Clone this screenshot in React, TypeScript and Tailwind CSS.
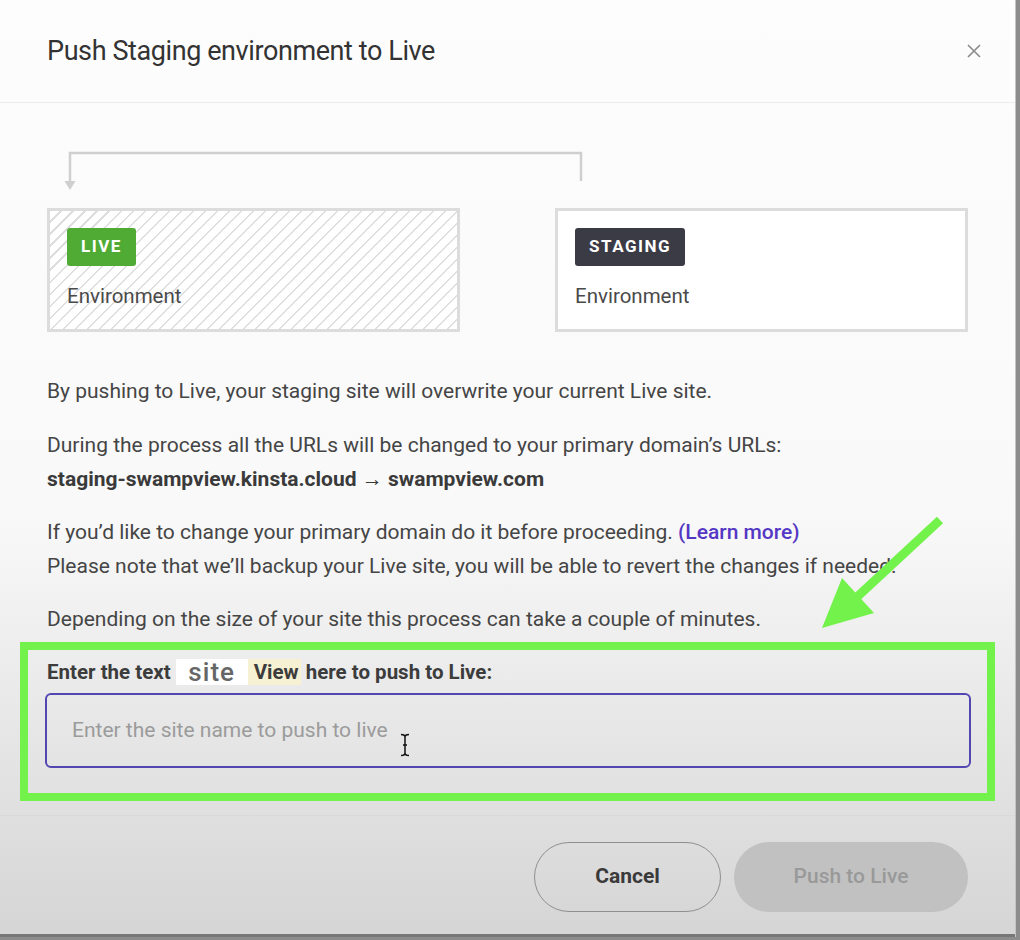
import React from 'react';

const font = { fontFamily: 'Roboto, "Liberation Sans", sans-serif' };

function Connector() {
  // bracket line running from the Staging card back to the Live card
  return (
    <svg width="530" height="42" viewBox="0 0 530 42" className="block ml-[16px]">
      <path d="M7 32 V2 H518 V30" fill="none" stroke="#cfcfcf" strokeWidth="2.5" />
      <path d="M1.5 30 L12.5 30 L7 39 Z" fill="#cfcfcf" />
    </svg>
  );
}

function EnvCard({ label, badgeClass, hatched }: { label: string; badgeClass: string; hatched?: boolean }) {
  return (
    <div
      className={`h-[124px] border-[3px] border-[#dcdcdc] pl-[17px] pt-[17px] ${
        hatched
          ? 'bg-[repeating-linear-gradient(135deg,#ffffff_0px,#ffffff_7px,#dedede_7px,#dedede_8.5px)]'
          : 'bg-white'
      }`}
    >
      <span
        className={`inline-flex items-center h-[38px] px-[14px] rounded-[3px] text-white font-bold text-[17px] tracking-[0.09em] ${badgeClass}`}
      >
        {label}
      </span>
      <div className="mt-[15px] text-[20.5px] text-[#4a4a4a]">Environment</div>
    </div>
  );
}

function Arrow() {
  return (
    <svg width="130" height="120" viewBox="0 0 130 120" className="absolute left-[815px] top-[512px]">
      <path d="M125 8 L42 85" stroke="#72f24b" strokeWidth="9" strokeLinecap="butt" />
      <path d="M7 116 L27 66 L59 101 Z" fill="#72f24b" />
    </svg>
  );
}

export default function App() {
  return (
    <div className="w-[1020px] h-[940px] bg-[#8c8c8c] overflow-hidden" style={font}>
      <div className="relative w-[1016px] h-[937px] flex flex-col bg-linear-to-b from-[#fdfdfd] via-[#f9f9f9] via-55% to-[#d5d5d5] border-r border-[#c4c4c4]">
        {/* Header */}
        <div className="h-[103px] flex-shrink-0 flex items-center justify-between pl-[47px] pr-[33px] border-b border-[#ececec]">
          <h1 className="text-[27px] text-[#333] tracking-[-0.015em]">Push Staging environment to Live</h1>
          <svg width="16" height="16" viewBox="0 0 16 16">
            <path d="M2 2 L14 14 M14 2 L2 14" stroke="#8a8a8a" strokeWidth="1.6" />
          </svg>
        </div>

        {/* Body */}
        <div className="flex-1 px-[47px] pt-[48px]">
          <Connector />
          <div className="grid grid-cols-2 gap-[95px] mt-[15px]">
            <EnvCard label="LIVE" badgeClass="bg-[#4fab33]" hatched />
            <EnvCard label="STAGING" badgeClass="bg-[#3b3b45]" />
          </div>

          <div className="mt-[42px] text-[21px] leading-[34px] text-[#454545]">
            <p>By pushing to Live, your staging site will overwrite your current Live site.</p>
            <p className="mt-[20px]">During the process all the URLs will be changed to your primary domain’s URLs:</p>
            <p className="font-bold text-[#3a3a3a]">staging-swampview.kinsta.cloud → swampview.com</p>
            <p className="mt-[19px]">
              If you’d like to change your primary domain do it before proceeding.{' '}
              <span className="text-[#5437c4] font-medium">(Learn more)</span>
            </p>
            <p>Please note that we’ll backup your Live site, you will be able to revert the changes if needed.</p>
            <p className="mt-[19px]">Depending on the size of your site this process can take a couple of minutes.</p>
          </div>

          {/* highlighted input block */}
          <div className="mt-[6px] -mx-[27px] border-[8px] border-[#72f24b] pl-[17px] pr-[16px] pt-[8px] pb-[25px]">
            <div className="flex items-center ml-[2px] text-[20.5px] font-bold text-[#3c3c3c] h-[28px]">
              <span>Enter the text&nbsp;</span>
              <span className="inline-flex items-center bg-[#f6f1d2] h-[26px] pr-[2px]">
                <span className="inline-flex items-center justify-center bg-white w-[72px] h-[26px] text-[26px] font-medium text-[#666] tracking-[0.04em]">
                  site
                </span>
                <span className="ml-[6px]">View</span>
              </span>
              <span>&nbsp;here to push to Live:</span>
            </div>
            <div className="relative mt-[7px] h-[75px] rounded-[6px] border-2 border-[#5446b2] flex items-center pl-[25px]">
              <span className="text-[21px] text-[#9b9b9b]">Enter the site name to push to live</span>
              <svg width="12" height="24" viewBox="0 0 12 24" className="absolute left-[352px] top-[38px]">
                <path d="M2 1.5 Q6 1.5 6 4 V20 Q6 22.5 2 22.5 M10 1.5 Q6 1.5 6 4 M6 20 Q6 22.5 10 22.5 M4 12 H8" fill="none" stroke="#111" strokeWidth="1.5" />
              </svg>
            </div>
          </div>
        </div>

        {/* Footer */}
        <div className="h-[119px] flex-shrink-0 border-t border-[#d9d9d9] flex items-start justify-end gap-[13px] pr-[47px] pt-[26px]">
          <button className="w-[187px] h-[70px] rounded-full border-[1.5px] border-[#8f8f8f] text-[21px] font-bold text-[#3a3a3a]">
            Cancel
          </button>
          <button className="w-[234px] h-[70px] rounded-full bg-[#c1c1c1] text-[21px] font-medium text-[#999]">
            Push to Live
          </button>
        </div>

        <div className="h-[3px] bg-[#777] flex-shrink-0" />

        <Arrow />
      </div>
    </div>
  );
}
